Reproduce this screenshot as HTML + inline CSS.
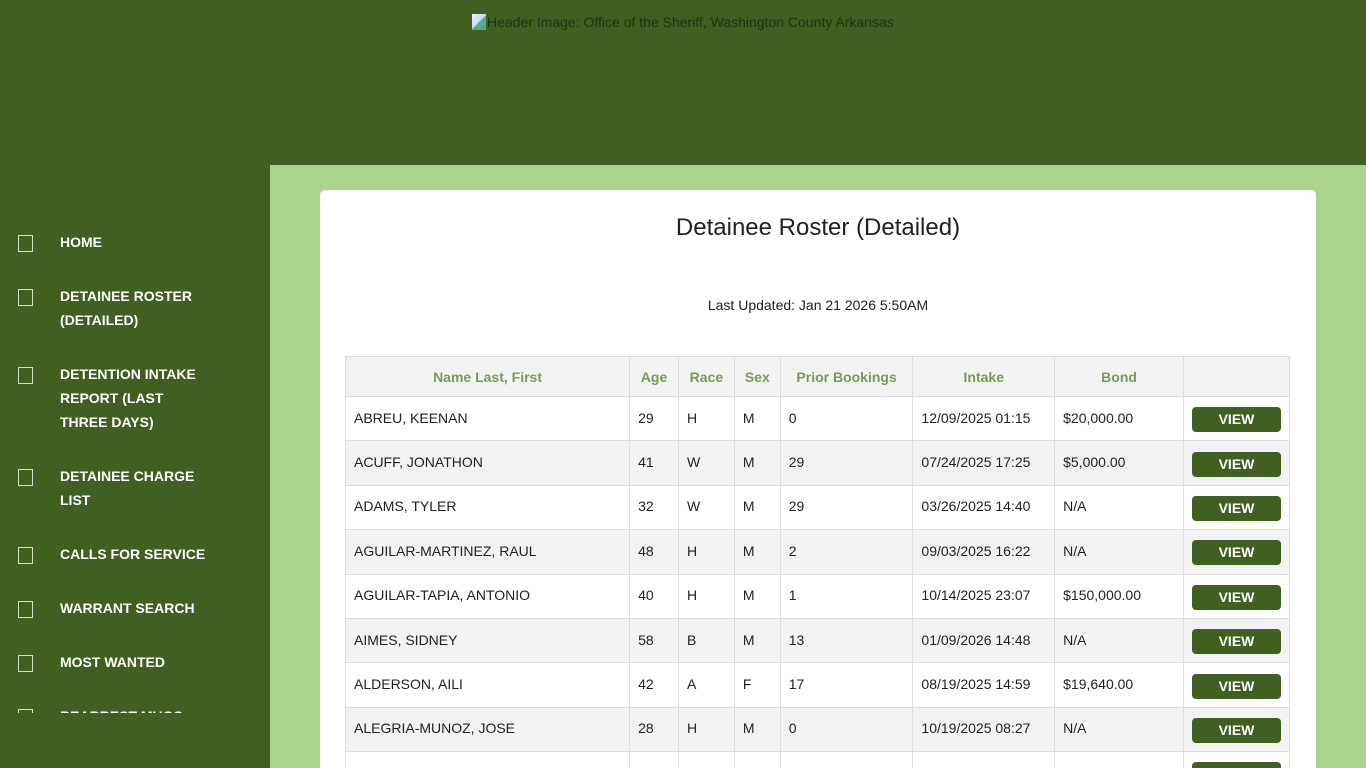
<!DOCTYPE html>
<html><head><meta charset="utf-8"><style>
*{margin:0;padding:0;box-sizing:border-box}
html,body{width:1366px;height:768px;overflow:hidden}
body{background:#415f20;font-family:"Liberation Sans",Arial,sans-serif;position:relative}
.hdr{position:absolute;left:472px;top:14px;font-size:14px;color:#1f3510;display:flex;align-items:center}
.hdr i{display:inline-block;width:14px;height:16px;background:linear-gradient(135deg,#eef 0,#cde 50%,#5a8 51%);margin-right:1px}
.side{position:absolute;left:0;top:165px;width:270px;height:548px;overflow:hidden}
.side ul{list-style:none;padding-top:65px}
.side li{position:relative;padding-left:60px;color:#fff;font-weight:bold;font-size:14px;line-height:24px;margin-bottom:30px;width:210px}
.side li:before{content:"";position:absolute;left:18px;top:5px;width:13px;height:15px;border:1px solid #d8dccf}
.main{position:absolute;left:270px;top:165px;width:1096px;height:603px;background:#acd38a;overflow:hidden}
.card{position:absolute;left:50px;top:25px;width:996px;height:578px;background:#fff;border-radius:5px 5px 0 0;overflow:hidden}
h1{position:absolute;top:24px;width:100%;text-align:center;font-weight:normal;font-size:24px;color:#222}
.upd{position:absolute;top:107px;width:100%;text-align:center;font-size:14px;color:#222}
table{position:absolute;left:25px;top:166px;width:945px;border-collapse:collapse;font-size:14px;color:#222}
th{height:40px;background:#f2f2f2;color:#7a9a5a;font-weight:bold;border:1px solid #ddd;text-align:center}
td{height:44.4px;border:1px solid #ddd;padding:0 8px 2px;vertical-align:middle}
tr:nth-child(odd) td{background:#f2f2f2}
.b{display:block;width:89px;height:25px;margin:4px auto 0;background:#415f20;color:#fff;font-weight:bold;border-radius:4px;text-align:center;line-height:25px;font-size:14px}
</style></head><body>
<div class="hdr"><i></i>Header Image: Office of the Sheriff, Washington County Arkansas</div>
<div class="side"><ul>
<li>HOME</li><li>DETAINEE ROSTER (DETAILED)</li><li>DETENTION INTAKE REPORT (LAST THREE DAYS)</li><li>DETAINEE CHARGE LIST</li><li>CALLS FOR SERVICE</li><li>WARRANT SEARCH</li><li>MOST WANTED</li><li>REARREST MUGS</li>
</ul></div>
<div class="main"><div class="card">
<h1>Detainee Roster (Detailed)</h1>
<div class="upd">Last Updated: Jan 21 2026 5:50AM</div>
<table>
<tr><th style="width:285px">Name Last, First</th><th style="width:49px">Age</th><th style="width:56px">Race</th><th style="width:46px">Sex</th><th style="width:133px">Prior Bookings</th><th style="width:142px">Intake</th><th style="width:129px">Bond</th><th style="width:105px"></th></tr>
<tr><td>ABREU, KEENAN</td><td>29</td><td>H</td><td>M</td><td>0</td><td>12/09/2025 01:15</td><td>$20,000.00</td><td><span class="b">VIEW</span></td></tr>
<tr><td>ACUFF, JONATHON</td><td>41</td><td>W</td><td>M</td><td>29</td><td>07/24/2025 17:25</td><td>$5,000.00</td><td><span class="b">VIEW</span></td></tr>
<tr><td>ADAMS, TYLER</td><td>32</td><td>W</td><td>M</td><td>29</td><td>03/26/2025 14:40</td><td>N/A</td><td><span class="b">VIEW</span></td></tr>
<tr><td>AGUILAR-MARTINEZ, RAUL</td><td>48</td><td>H</td><td>M</td><td>2</td><td>09/03/2025 16:22</td><td>N/A</td><td><span class="b">VIEW</span></td></tr>
<tr><td>AGUILAR-TAPIA, ANTONIO</td><td>40</td><td>H</td><td>M</td><td>1</td><td>10/14/2025 23:07</td><td>$150,000.00</td><td><span class="b">VIEW</span></td></tr>
<tr><td>AIMES, SIDNEY</td><td>58</td><td>B</td><td>M</td><td>13</td><td>01/09/2026 14:48</td><td>N/A</td><td><span class="b">VIEW</span></td></tr>
<tr><td>ALDERSON, AILI</td><td>42</td><td>A</td><td>F</td><td>17</td><td>08/19/2025 14:59</td><td>$19,640.00</td><td><span class="b">VIEW</span></td></tr>
<tr><td>ALEGRIA-MUNOZ, JOSE</td><td>28</td><td>H</td><td>M</td><td>0</td><td>10/19/2025 08:27</td><td>N/A</td><td><span class="b">VIEW</span></td></tr>
<tr><td>ALEN, KATLYNN</td><td>33</td><td>B</td><td>F</td><td>3</td><td>01/10/2026 10:10</td><td>$5,000.00</td><td><span class="b">VIEW</span></td></tr>
</table>
</div></div>
</body></html>
